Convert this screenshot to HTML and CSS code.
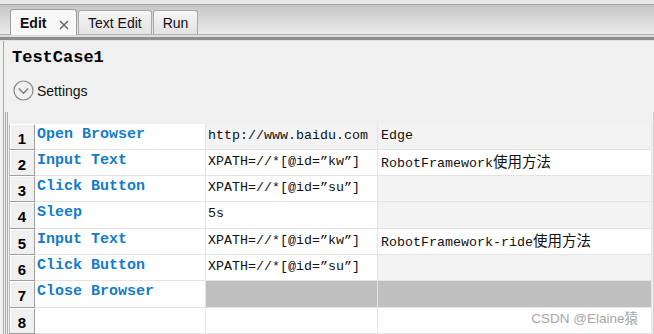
FILE: index.html
```html
<!DOCTYPE html>
<html>
<head>
<meta charset="utf-8">
<link rel="stylesheet" href="styles.css">
</head>
<body>
<div class="top"></div>
<div class="tabbar">
  <div class="tab active"><span class="tab-label">Edit</span><svg class="close" width="10" height="10" viewBox="0 0 10 10"><path d="M1 1 L9 9 M9 1 L1 9" stroke="#5a5a5a" stroke-width="1.3" fill="none"/></svg></div>
  <div class="tab">Text Edit</div>
  <div class="tab">Run</div>
</div>
<div class="sep"></div>
<div class="panel">
  <div class="title">TestCase1</div>
  <div class="settings">
    <svg class="chev" width="21" height="21" viewBox="0 0 21 21"><circle cx="10.5" cy="10.5" r="9.5" fill="none" stroke="#8a8a8a" stroke-width="1.2"/><path d="M5.8 8.6 L10.5 13.3 L15.2 8.6" fill="none" stroke="#7a7a7a" stroke-width="1.4"/></svg>
    <span>Settings</span>
  </div>
  <div class="grid-wrap">
    <div class="grid">
      <div class="rh">1</div><div class="c kw">Open Browser</div><div class="c arg soft">http://www.baidu.com</div><div class="c arg soft">Edge</div>
      <div class="rh">2</div><div class="c kw">Input Text</div><div class="c arg">XPATH=//*[@id=”kw”]</div><div class="c arg">RobotFramework<span class="cjk">使用方法</span></div>
      <div class="rh">3</div><div class="c kw">Click Button</div><div class="c arg">XPATH=//*[@id=”su”]</div><div class="c arg soft"></div>
      <div class="rh">4</div><div class="c kw">Sleep</div><div class="c arg">5s</div><div class="c arg soft"></div>
      <div class="rh">5</div><div class="c kw">Input Text</div><div class="c arg">XPATH=//*[@id=”kw”]</div><div class="c arg">RobotFramework-ride<span class="cjk">使用方法</span></div>
      <div class="rh">6</div><div class="c kw">Click Button</div><div class="c arg">XPATH=//*[@id=”su”]</div><div class="c arg soft"></div>
      <div class="rh">7</div><div class="c kw">Close Browser</div><div class="c arg dis"></div><div class="c arg dis"></div>
      <div class="rh">8</div><div class="c"></div><div class="c"></div><div class="c"></div>
    </div>
  </div>
  <div class="watermark">CSDN @Elaine猿</div>
</div>
</body>
</html>
```
FILE: styles.css
```css
html, body {
  margin: 0;
  padding: 0;
}
body {
  width: 654px;
  height: 334px;
  overflow: hidden;
  background: #f0f0f0;
  font-family: "Liberation Sans", Arial, sans-serif;
  position: relative;
}
.top {
  height: 4px;
  background: #e8e8e8;
  border-bottom: 1px solid #a4a4a4;
}
.tabbar {
  height: 29px;
  border-bottom: 1px solid #b2b2b2;
  background: linear-gradient(#c6c6c6, #ebebeb);
  display: flex;
  align-items: flex-end;
  padding-left: 10px;
}
.tab {
  box-sizing: border-box;
  height: 24px;
  margin-right: 1px;
  padding: 0 9px;
  border: 1px solid #a8a8a8;
  border-bottom: none;
  border-radius: 3px 3px 0 0;
  background: linear-gradient(#f6f6f6, #e2e2e2);
  font-size: 14px;
  color: #111;
  display: flex;
  align-items: center;
}
.tab.active {
  height: 26px;
  margin-bottom: -1px;
  width: 67px;
  padding: 0 0 0 9px;
  background: #f8f8f8;
  border-color: #9c9c9c;
}
.tab-label {
  font-weight: bold;
}
.close {
  display: block;
  flex-shrink: 0;
  margin-left: 13px;
  margin-top: 4px;
}
.sep {
  height: 2px;
  background: #dcdcdc;
  border-bottom: 3px solid #8e8e8e;
  box-shadow: 0 1px 0 #e4e4e4;
}
.panel {
  margin-left: 3px;
  margin-top: 1px;
  border-left: 1px solid #a8a8a8;
  height: 293px;
}
.title {
  padding: 7px 0 0 8px;
  font-family: "Liberation Mono", monospace;
  font-weight: bold;
  font-size: 17px;
  line-height: 20px;
  color: #000;
}
.settings {
  margin-top: 12px;
  margin-left: 9px;
  height: 21px;
  display: flex;
  align-items: center;
  gap: 3px;
  font-size: 14px;
  color: #111;
}
.chev {
  display: block;
}
.grid-wrap {
  margin-top: 11px;
  margin-left: 1px;
  padding-top: 12px;
  padding-left: 1px;
  border-left: 3px double #a8a8a8;
  border-right: 1px solid #d4d4d4;
  height: 210px;
}
.grid {
  display: grid;
  grid-template-columns: 26px 171px 172px 274px;
  grid-template-rows: 26px 26px 26px 27px 26px 26px 27px 26px;
}
.rh {
  box-sizing: border-box;
  background: #f0f0f0;
  border-top: 1px solid #fff;
  border-left: 1px solid #b8b8b8;
  border-right: 1px solid #a0a0a0;
  border-bottom: 1px solid #a0a0a0;
  box-shadow: inset 1px 0 0 #fff;
  font-weight: bold;
  font-size: 15px;
  color: #000;
  display: flex;
  align-items: center;
  justify-content: center;
  padding-top: 2px;
}
.c {
  box-sizing: border-box;
  background: #fff;
  border-right: 1px solid #e4e4e4;
  border-bottom: 1px solid #e4e4e4;
  white-space: nowrap;
  overflow: hidden;
}
.kw {
  padding: 2px 0 0 2px;
  font-family: "Liberation Mono", monospace;
  font-weight: bold;
  font-size: 15px;
  line-height: 18px;
  color: #127cca;
}
.arg {
  padding: 3px 0 0 2px;
  font-family: "Liberation Mono", "Noto Sans CJK SC", monospace;
  font-size: 13.33px;
  line-height: 18px;
  color: #111;
}
.grid .arg:nth-child(4n) {
  padding-left: 3px;
}
.cjk {
  font-family: "Noto Sans CJK SC", sans-serif;
  font-size: 14.5px;
  line-height: 16px;
}
.soft {
  background: #f3f3f3;
}
.dis {
  background: #c0c0c0;
}
.watermark {
  position: absolute;
  right: 16px;
  bottom: 7px;
  font-family: "Liberation Sans", "Noto Sans CJK SC", sans-serif;
  font-size: 13.5px;
  color: #a6a6a6;
}
```
